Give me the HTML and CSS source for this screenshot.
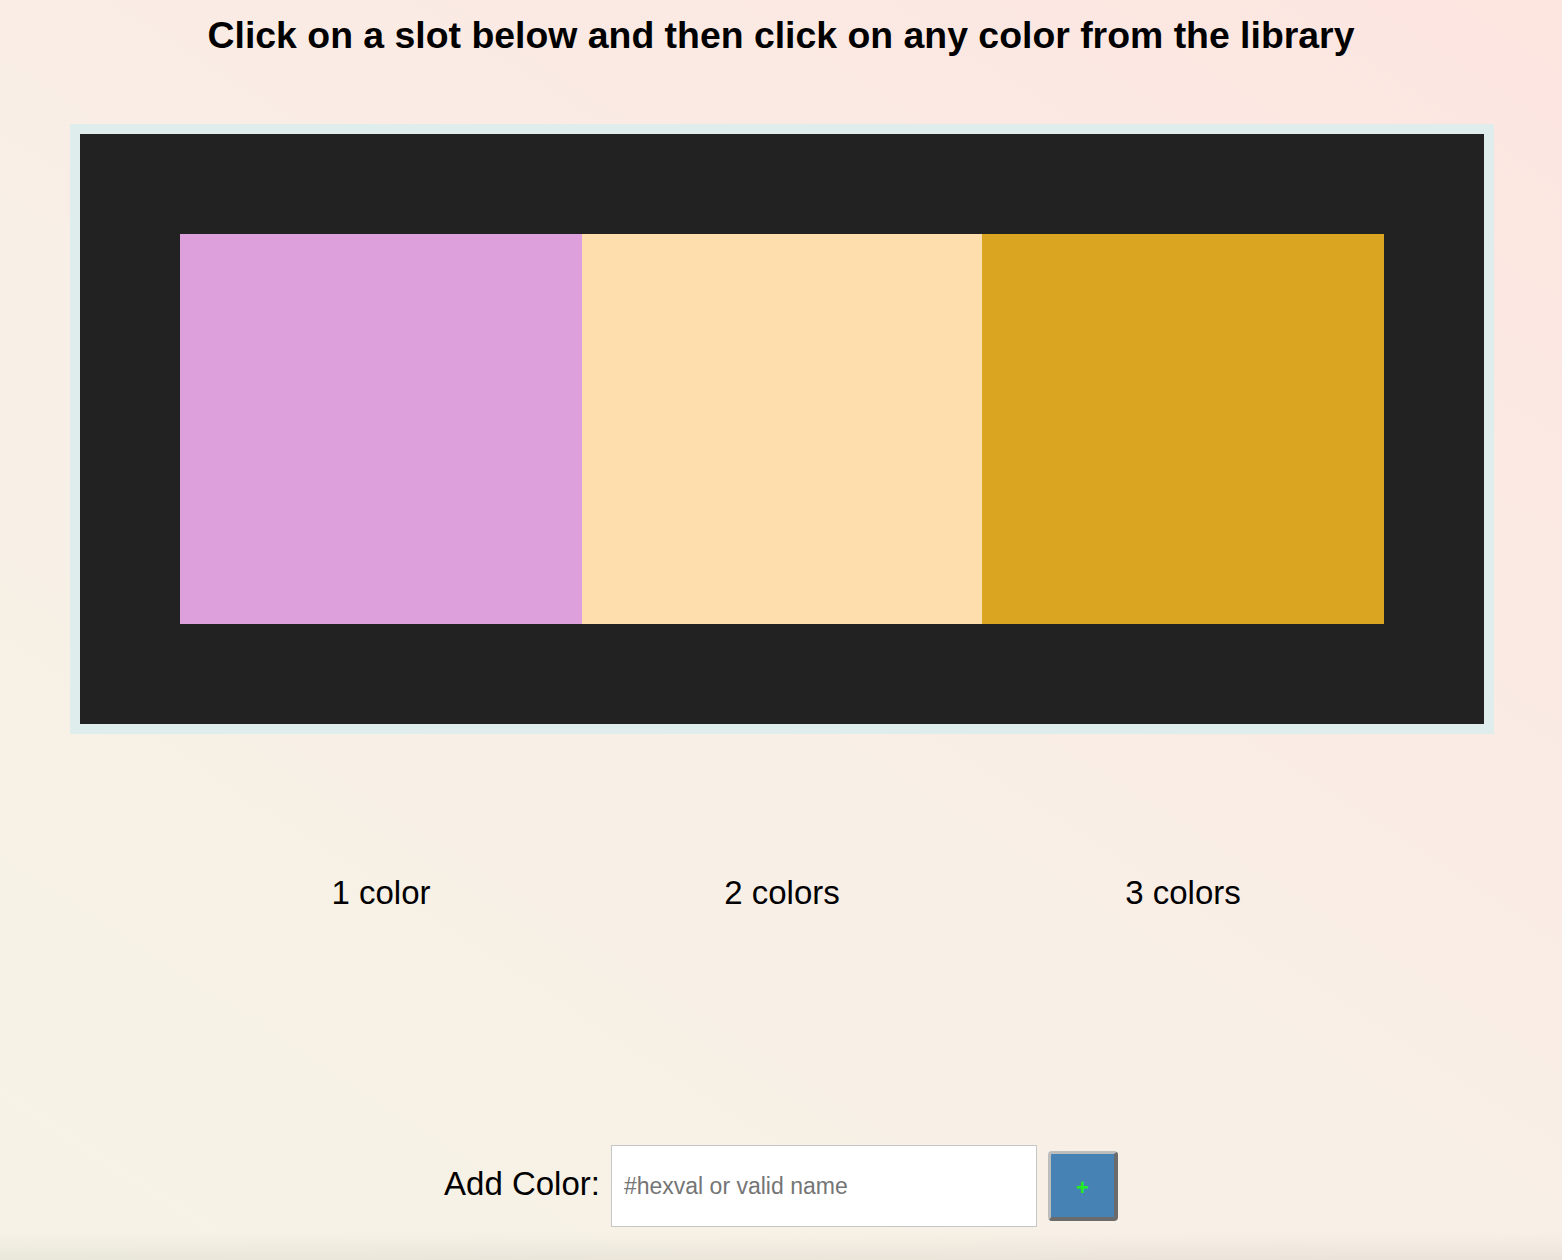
FILE: index.html
```html
<!DOCTYPE html>
<html lang="en">
<head>
<meta charset="utf-8">
<title>Color Slots</title>
<link rel="stylesheet" href="styles.css">
</head>
<body>
<main class="page">
  <h1 class="title">Click on a slot below and then click on any color from the library</h1>
  <section class="frame">
    <div class="slots">
      <div class="slot slot-plum"></div>
      <div class="slot slot-navajo"></div>
      <div class="slot slot-gold"></div>
    </div>
  </section>
  <div class="labels">
    <span class="label">1 color</span>
    <span class="label">2 colors</span>
    <span class="label">3 colors</span>
  </div>
  <form class="add-row">
    <label class="add-label" for="color-input">Add Color:</label>
    <input id="color-input" class="add-input" type="text" placeholder="#hexval or valid name">
    <button class="add-btn" type="button">+</button>
  </form>
</main>
</body>
</html>
```

FILE: styles.css
```css
html, body {
  margin: 0;
  padding: 0;
  height: 100%;
}

body {
  font-family: "Liberation Sans", Arial, sans-serif;
  color: #000;
  background:
    linear-gradient(to bottom, rgba(0,0,0,0) calc(100% - 28px), rgba(0,0,0,0.05) 100%),
    linear-gradient(33deg, #f6f3e6 0%, #f8efe6 45%, #fbe9e3 75%, #fde5e0 100%);
  min-height: 1260px;
  overflow: hidden;
}

.page {
  display: flex;
  flex-direction: column;
  align-items: stretch;
}

.title {
  margin: 14px 0 0;
  font-size: 37.4px;
  line-height: 43px;
  font-weight: bold;
  text-align: center;
}

.frame {
  margin: 67px 0 0 70px;
  width: 1424px;
  box-sizing: border-box;
  border: 10px solid #dfeeed;
  background: #222222;
  padding: 100px;
}

.slots {
  display: grid;
  grid-template-columns: 402px 400px 402px;
  height: 390px;
}

.slot-plum { background: #dda0dd; }
.slot-navajo { background: #ffdead; }
.slot-gold { background: #daa520; }

.labels {
  margin: 140px 0 0 180px;
  width: 1204px;
  display: grid;
  grid-template-columns: 402px 400px 402px;
}

.label {
  font-size: 33px;
  line-height: 38px;
  text-align: center;
}

.add-row {
  margin: 233px 0 0;
  display: flex;
  justify-content: center;
  align-items: center;
  gap: 11px;
}

.add-label {
  font-size: 33px;
  line-height: 38px;
  margin-bottom: 5px;
}

.add-input {
  width: 426px;
  height: 82px;
  box-sizing: border-box;
  border: 1px solid #c6c6c6;
  background: #ffffff;
  padding: 0 12px;
  font-family: "Liberation Sans", Arial, sans-serif;
  font-size: 23px;
  color: #333;
  outline: none;
}

.add-input::placeholder {
  color: #757575;
}

.add-btn {
  width: 70px;
  height: 70px;
  box-sizing: border-box;
  background: #4682b4;
  border-style: solid;
  border-width: 3px 4px 4px 3px;
  border-color: #bdbdbd #6b6b6b #6b6b6b #bdbdbd;
  border-radius: 4px;
  color: #22ee22;
  font-family: "Liberation Sans", Arial, sans-serif;
  font-size: 22px;
  font-weight: bold;
  line-height: 1;
  padding: 0;
  padding-top: 4px;
}
```
